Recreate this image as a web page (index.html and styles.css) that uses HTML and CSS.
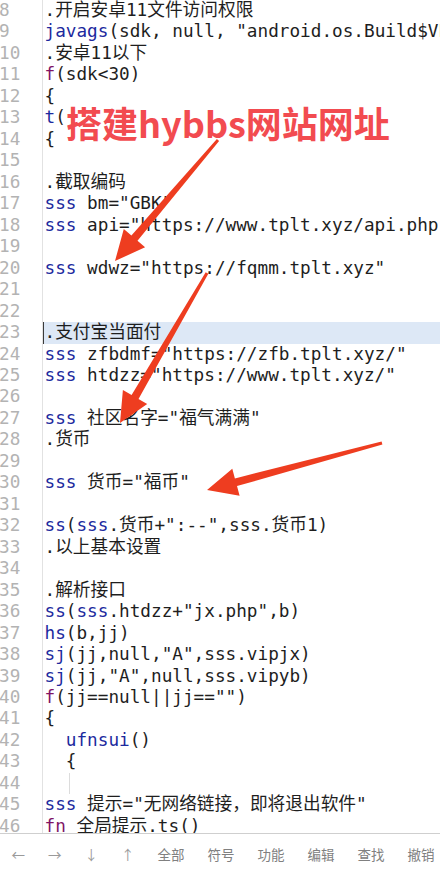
FILE: index.html
```html
<!DOCTYPE html>
<html lang="zh-CN">
<head>
<meta charset="utf-8">
<title>编辑器</title>
<link rel="stylesheet" href="styles.css">
</head>
<body>
<div class="app">
  <div class="editor">
    <div class="gutter">
      <div class="ln">8</div><div class="ln">9</div><div class="ln">10</div><div class="ln">11</div><div class="ln">12</div><div class="ln">13</div><div class="ln">14</div><div class="ln">15</div><div class="ln">16</div><div class="ln">17</div><div class="ln">18</div><div class="ln">19</div><div class="ln">20</div><div class="ln">21</div><div class="ln">22</div><div class="ln">23</div><div class="ln">24</div><div class="ln">25</div><div class="ln">26</div><div class="ln">27</div><div class="ln">28</div><div class="ln">29</div><div class="ln">30</div><div class="ln">31</div><div class="ln">32</div><div class="ln">33</div><div class="ln">34</div><div class="ln">35</div><div class="ln">36</div><div class="ln">37</div><div class="ln">38</div><div class="ln">39</div><div class="ln">40</div><div class="ln">41</div><div class="ln">42</div><div class="ln">43</div><div class="ln">44</div><div class="ln">45</div><div class="ln">46</div>
    </div>
    <div class="code">
      <div class="line">.开启安卓11文件访问权限</div>
      <div class="line"><span class="kw">javags</span>(sdk, null, "android.os.Build$VERSION", "SDK_INT")</div>
      <div class="line">.安卓11以下</div>
      <div class="line"><span class="fw">f</span>(sdk&lt;30)</div>
      <div class="line">{</div>
      <div class="line"><span class="kw">t</span>(</div>
      <div class="line">{</div>
      <div class="line"></div>
      <div class="line">.截取编码</div>
      <div class="line"><span class="kw">sss</span> bm="GBK"</div>
      <div class="line"><span class="kw">sss</span> api="https://www.tplt.xyz/api.php"</div>
      <div class="line"></div>
      <div class="line"><span class="kw">sss</span> wdwz="https://fqmm.tplt.xyz"</div>
      <div class="line"></div>
      <div class="line"></div>
      <div class="line current">.支付宝当面付</div>
      <div class="line"><span class="kw">sss</span> zfbdmf="https://zfb.tplt.xyz/"</div>
      <div class="line"><span class="kw">sss</span> htdzz="https://www.tplt.xyz/"</div>
      <div class="line"></div>
      <div class="line"><span class="kw">sss</span> 社区名字="福气满满"</div>
      <div class="line">.货币</div>
      <div class="line"></div>
      <div class="line"><span class="kw">sss</span> 货币="福币"</div>
      <div class="line"></div>
      <div class="line"><span class="kw">ss</span>(<span class="kw">sss</span>.货币+":--",sss.货币1)</div>
      <div class="line">.以上基本设置</div>
      <div class="line"></div>
      <div class="line">.解析接口</div>
      <div class="line"><span class="kw">ss</span>(<span class="kw">sss</span>.htdzz+"jx.php",b)</div>
      <div class="line"><span class="kw">hs</span>(b,jj)</div>
      <div class="line"><span class="kw">sj</span>(jj,null,"A",sss.vipjx)</div>
      <div class="line"><span class="kw">sj</span>(jj,"A",null,sss.vipyb)</div>
      <div class="line"><span class="fw">f</span>(jj==null||jj=="")</div>
      <div class="line">{</div>
      <div class="line">  <span class="kw">ufnsui</span>()</div>
      <div class="line">  {</div>
      <div class="line"><span class="guide"></span></div>
      <div class="line"><span class="kw">sss</span> 提示="无网络链接，即将退出软件"</div>
      <div class="line"><span class="fw">fn</span> 全局提示.ts()</div>
    </div>
  </div>
  <div class="toolbar">
    <span class="tb tb-arrow">←</span>
    <span class="tb tb-arrow">→</span>
    <span class="tb tb-arrow">↓</span>
    <span class="tb tb-arrow">↑</span>
    <span class="tb">全部</span>
    <span class="tb">符号</span>
    <span class="tb">功能</span>
    <span class="tb">编辑</span>
    <span class="tb">查找</span>
    <span class="tb">撤销</span>
  </div>
  <div class="note">搭建hybbs网站网址</div>
  <svg class="arrows" width="440" height="869" viewBox="0 0 440 869">
    <polygon points="219.1,141 137.5,240.8 145.1,247.3 115,261 123.8,229.1 131.4,235.6 216.9,139"/>
    <polygon points="208.3,273.8 138.5,399.1 147.2,404.1 120,423 122.9,390 131.6,395 205.7,272.2"/>
    <polygon points="382.4,444.5 237,486.1 239.6,495.7 207,490 232.3,468.7 234.9,478.4 381.6,441.6"/>
  </svg>
</div>
</body>
</html>
```

FILE: styles.css
```css
html, body {
  margin: 0;
  padding: 0;
  background: #ffffff;
}

body {
  width: 440px;
  height: 869px;
  overflow: hidden;
}

.app {
  position: relative;
  width: 440px;
  height: 869px;
  display: flex;
  flex-direction: column;
  overflow: hidden;
}

.editor {
  flex: 0 0 833px;
  display: flex;
  overflow: hidden;
  font-family: "DejaVu Sans Mono", "Noto Sans CJK SC", monospace;
  font-size: 17.7px;
  line-height: 21.47px;
  color: #1e1e1e;
}

.gutter {
  flex: 0 0 42px;
  border-right: 1px solid #e2e2e2;
  overflow: hidden;
}

.ln {
  height: 21.47px;
  margin-left: -1px;
  color: #b3b3b3;
  white-space: nowrap;
}

.code {
  flex: 1;
  min-width: 0;
}

.line {
  height: 21.47px;
  padding-left: 1.5px;
  white-space: pre;
  overflow: hidden;
}

.line.current {
  background: #dde8f6;
  box-shadow: inset 1px 0 0 #3a3a3a;
}

.kw {
  color: #1c2a9e;
}

.fw {
  color: #7f1466;
}

.guide {
  display: inline-block;
  vertical-align: top;
  height: 21.47px;
  margin-left: 24.5px;
  border-left: 1px solid #dcdcdc;
}

.toolbar {
  flex: 0 0 35px;
  box-sizing: border-box;
  border-top: 1px solid #cfcfcf;
  display: flex;
  align-items: center;
  padding-top: 6px;
  font-family: "Noto Sans CJK SC", sans-serif;
  font-size: 13.5px;
  color: #808080;
  white-space: nowrap;
}

.tb {
  flex: 0 0 50px;
  text-align: center;
}

.tb-arrow {
  flex: 0 0 36.5px;
  color: #9a9a9a;
}

.note {
  position: absolute;
  left: 66px;
  top: 104px;
  font-family: "Noto Sans CJK SC", sans-serif;
  font-weight: 700;
  font-size: 36px;
  line-height: 36px;
  color: #f24b50;
  white-space: nowrap;
}

.arrows {
  position: absolute;
  left: 0;
  top: 0;
  pointer-events: none;
}

.arrows polygon {
  fill: #ee3d20;
}
```
